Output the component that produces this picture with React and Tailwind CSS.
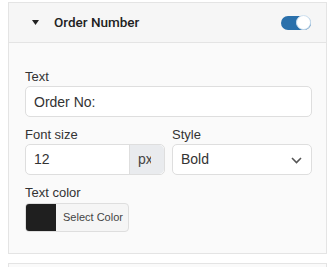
import { useState } from "react";

const FONT = { fontFamily: '"Liberation Sans", Arial, sans-serif' };

function Field({ label, children, className = "" }) {
  return (
    <div className={className}>
      <label className="mb-[1px] block text-[13px] leading-[16px] text-[#333]">{label}</label>
      {children}
    </div>
  );
}

export default function App() {
  const [enabled, setEnabled] = useState(true);
  const [text, setText] = useState("Order No:");
  const [size, setSize] = useState("12");
  const [style, setStyle] = useState("Bold");

  return (
    <div className="min-h-screen bg-white pt-[2px]" style={FONT}>
      <section className="ml-[8px] w-[319px] border border-[#e4e4e4] bg-[#fafafa]">
        <header className="flex h-[40px] items-center border-b border-[#e4e4e4] bg-[#f6f6f6] pl-[23px] pr-[15px]">
          <svg width="7" height="5" viewBox="0 0 7 5" className="mr-[15px]">
            <polygon points="0,0 7,0 3.5,5" fill="#222" />
          </svg>
          <span className="font-['Roboto',sans-serif] text-[13.5px] font-medium text-[#222]">Order Number</span>
          <button
            onClick={() => setEnabled(!enabled)}
            className={`ml-auto flex h-[14px] w-[30px] items-center rounded-full ${enabled ? "justify-end bg-[#2a70ab]" : "justify-start bg-[#ccc]"}`}
          >
            <span className="h-[15px] w-[15px] rounded-full border border-[#cfe1f0] bg-white" />
          </button>
        </header>

        <div className="pb-[21px] pl-[16px] pr-[14px] pt-[26px]">
          <Field label="Text">
            <input
              value={text}
              onChange={(e) => setText(e.target.value)}
              className="block h-[31px] w-full rounded-[5px] border border-[#dedede] bg-white px-[8px] text-[14px] text-[#333] outline-none"
            />
          </Field>

          <div className="mt-[10px] grid grid-cols-2 gap-[7px]">
            <Field label="Font size">
              <div className="flex h-[31px] rounded-[5px] border border-[#dedede] bg-white">
                <input
                  value={size}
                  onChange={(e) => setSize(e.target.value)}
                  className="w-0 flex-1 bg-transparent px-[8px] text-[14px] text-[#333] outline-none"
                />
                <span className="flex w-[35px] items-center rounded-r-[5px] border-l border-[#dedede] bg-[#e9ebee] pl-[8px] text-[14px] text-[#444]">
                  <span className="w-[13px] overflow-hidden whitespace-nowrap">px</span>
                </span>
              </div>
            </Field>
            <Field label="Style">
              <div className="relative h-[31px]">
                <select
                  value={style}
                  onChange={(e) => setStyle(e.target.value)}
                  className="h-full w-full appearance-none rounded-[5px] border border-[#dedede] bg-white px-[8px] text-[14px] text-[#333] outline-none"
                >
                  <option>Normal</option>
                  <option>Bold</option>
                  <option>Italic</option>
                </select>
                <svg
                  width="11"
                  height="7"
                  viewBox="0 0 11 7"
                  className="pointer-events-none absolute right-[10px] top-[13px]"
                >
                  <path d="M1 1l4.5 4.5L10 1" fill="none" stroke="#555" strokeWidth="1.6" />
                </svg>
              </div>
            </Field>
          </div>

          <Field label="Text color" className="mt-[10px]">
            <button className="mt-[2px] flex h-[29px] w-[104px] overflow-hidden rounded-[4px] border border-[#dedede] bg-[#f5f5f5]">
              <span className="h-full w-[30px] bg-[#1f1f1f]" />
              <span className="flex h-full items-center pl-[7px] text-[11px] text-[#444]">Select Color</span>
            </button>
          </Field>
        </div>
      </section>

      <section className="ml-[8px] mt-[9px] h-[20px] w-[319px] border border-[#e4e4e4] bg-[#fafafa]" />
    </div>
  );
}
